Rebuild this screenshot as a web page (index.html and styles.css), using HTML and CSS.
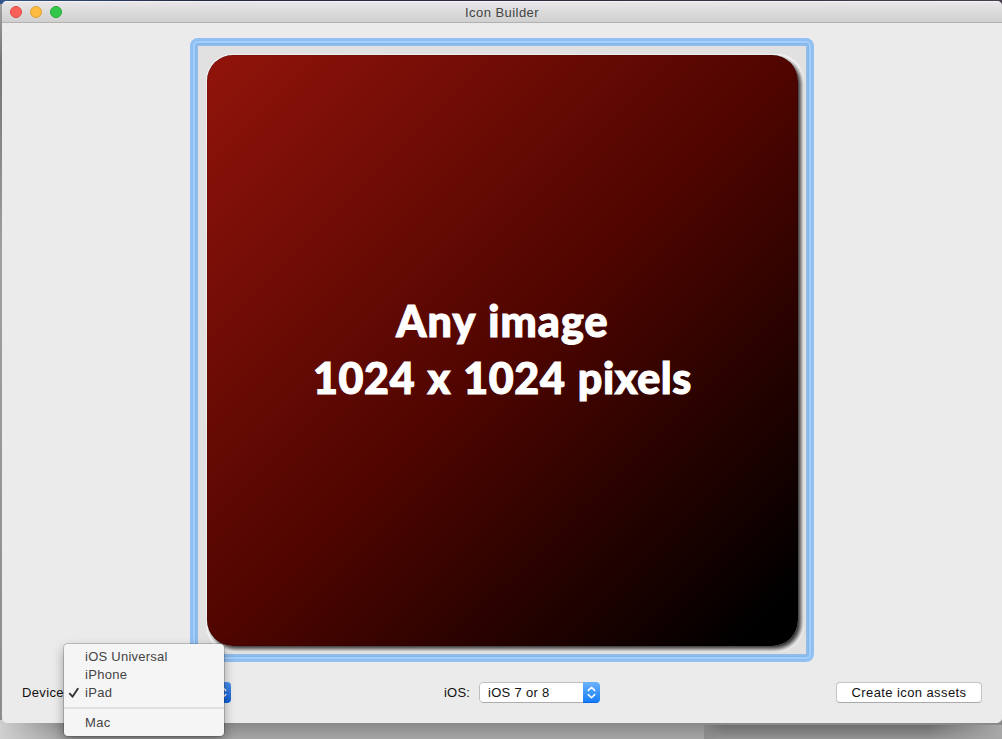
FILE: index.html
```
<!DOCTYPE html>
<html lang="en">
<head>
<meta charset="utf-8">
<title>Icon Builder</title>
<link rel="stylesheet" href="styles.css">
</head>
<body>
<main class="window">
  <header class="titlebar">
    <div class="lights"><span class="light close"></span><span class="light minimize"></span><span class="light zoom"></span></div>
    <h1 class="title"><span class="t-title">Icon Builder</span></h1>
  </header>
  <section class="content">
    <div class="well">
      <div class="well-line">
        <div class="well-inner">
          <div class="picture-back">
            <div class="picture">
              <p class="line-one">Any image</p>
              <p class="line-two">1024 x 1024 pixels</p>
            </div>
          </div>
        </div>
      </div>
    </div>
  </section>
  <footer class="controls">
    <div class="field device">
      <span class="t-device">Device:</span>
      <div class="popup device-popup"><span class="popup-value"></span><span class="stepper"><svg width="17" height="21" viewBox="0 0 17 21"><path d="M5.3 8.4 8.5 5.3l3.2 3.1M5.3 12.6l3.2 3.1 3.2-3.1"/></svg></span></div>
    </div>
    <div class="field ios">
      <span class="t-ios">iOS:</span>
      <div class="popup ios-popup"><span class="popup-value"><span class="t-value">iOS 7 or 8</span></span><span class="stepper"><svg width="17" height="21" viewBox="0 0 17 21"><path d="M5.3 8.4 8.5 5.3l3.2 3.1M5.3 12.6l3.2 3.1 3.2-3.1"/></svg></span></div>
    </div>
    <button class="create"><span class="t-create">Create icon assets</span></button>
  </footer>
</main>
<div class="behind"></div>
<ul class="menu">
  <li><span class="tick"></span><span class="m-universal">iOS Universal</span></li>
  <li><span class="tick"></span><span class="m-iphone">iPhone</span></li>
  <li><span class="tick"><svg width="12" height="12" viewBox="0 0 12 12"><path d="M1.8 6.7 4.5 9.7 9.8 1.8"/></svg></span><span class="m-ipad">iPad</span></li>
  <li class="separator"></li>
  <li><span class="tick"></span><span class="m-mac">Mac</span></li>
</ul>
</body>
</html>
```
FILE: styles.css
```
* { box-sizing: border-box; }
body {
  margin: 0;
  width: 1002px;
  height: 739px;
  overflow: hidden;
  position: relative;
  padding: 1px 0 0 2px;
  background: linear-gradient(90deg, #34568a 0, #23283f 200px, #322b40 600px, #46404c 1002px) 0 0 / 1002px 4px no-repeat,
    linear-gradient(#a0a0a0 0, #747474 60px, #a0a0a0 250px, #8c8c8c 700px) 0 4px / 2px 720px no-repeat,
    #a4a4a4;
  font: 13px/18px "Liberation Sans", Arial, sans-serif;
  color: #111;
}
.window {
  position: relative;
  z-index: 1;
  width: 1000px;
  height: 722px;
  display: flex;
  flex-direction: column;
  background: #ebebeb;
  border-radius: 5px;
  overflow: hidden;
}
.titlebar {
  flex: none;
  height: 22px;
  display: grid;
  grid-template-columns: 70px 1fr 70px;
  align-items: center;
  background: linear-gradient(#e8e6e8, #d0d0d0);
  border-top: 1px solid #f4f2f4;
  border-bottom: 1px solid #b1b1b1;
}
.lights { display: flex; gap: 8px; padding-left: 8px; }
.light { width: 12px; height: 12px; border-radius: 50%; border: 1px solid; }
.close { background: #fc605b; border-color: #e2463f; }
.minimize { background: #fdbc40; border-color: #dfa034; }
.zoom { background: #34c84a; border-color: #24aa35; }
.title { margin: 0; font-size: 13px; line-height: 18px; font-weight: 400; text-align: center; color: #444; padding-top: 1px; }
.content { flex: none; height: 639px; padding: 15px 0 0 188px; }
.well { width: 624px; height: 624px; padding: 2px; border-radius: 8px; background: #92c0f4; }
.well-line { height: 620px; border-radius: 6px; background: #8fbcec; padding: 1px; box-shadow: inset 0 0 0 1px #8ebcef, inset 0 0 0 3px #a3cffb, inset 0 0 0 4px #86b5ea; }
.well-inner { height: 608px; margin: 5px; padding: 8px; background: #e1e1e1; }
.picture-back { width: 598px; height: 598px; overflow: hidden; padding: 1px 0 0 1px; border-radius: 27px; background: #fff; }
.picture {
  width: 591px;
  height: 591px;
  border-radius: 26px;
  padding-top: 237px;
  text-align: center;
  color: #fff;
  background: linear-gradient(135deg, #91140b 0%, #500500 50%, #000 95%);
  box-shadow: inset 0 0 1px rgba(0,0,0,.8), 3px 3px 5px rgba(0,0,0,.85);
  font: 900 43px/57px Lato, sans-serif;
  -webkit-text-stroke: 1.1px #fff;
}
.picture p { margin: 0; white-space: nowrap; word-spacing: 1.5px; }
.line-one { letter-spacing: 1.1px; }
.line-two { letter-spacing: .6px; }
.controls { flex: 1; display: flex; align-items: flex-start; padding: 20px 20px 0; white-space: nowrap; }
.field { display: flex; line-height: 21px; }
.field > span { width: 47px; }
.device { width: 422px; }
.device-popup { width: 162px; }
.ios { width: 392px; }
.field.ios > span { width: 35px; }
.ios-popup { width: 121px; }
.popup { height: 21px; display: flex; border-radius: 4px; background: #fff; overflow: hidden; }
.popup-value { flex: 1; padding-left: 8px; border: 1px solid #bfbfbf; border-right: 0; border-bottom-color: #adadad; border-radius: 4px 0 0 4px; line-height: 19px; }
.stepper { width: 17px; height: 21px; background: linear-gradient(#6cb3fa, #157efb); border-bottom: 1px solid #0867e2; }
.device .stepper { background: linear-gradient(#4a91ee, #1360d8); }
svg { display: block; fill: none; stroke-linecap: round; stroke-linejoin: round; }
.stepper svg { stroke: #fff; stroke-width: 1.5; }
.create { width: 146px; height: 21px; padding: 0; font: inherit; line-height: 19px; color: #111; background: #fff; border: 1px solid #c3c3c3; border-bottom-color: #aaa; border-radius: 4px; }
.behind { position: absolute; left: 0; top: 720px; width: 1002px; height: 19px; background: linear-gradient(#828282, #a6a6a6); }
.behind::after { content: ""; position: absolute; left: 704px; right: 0; top: 5px; height: 14px; background: linear-gradient(90deg, rgba(140,140,140,.7), rgba(140,140,140,0) 20px, rgba(150,150,150,0) 75%, #a8a8a8), linear-gradient(#6c6c6c, #949494); }
.behind::before { content: ""; position: absolute; left: 0; top: 0; width: 65px; height: 19px; background: linear-gradient(90deg, #d0d0d0, rgba(130,130,130,0)); }
.menu {
  position: absolute;
  z-index: 2;
  left: 64px;
  top: 644px;
  width: 160px;
  height: 92px;
  margin: 0;
  padding: 4px 0;
  list-style: none;
  border-radius: 4px;
  background: #f5f5f5;
  color: #444;
  box-shadow: 0 0 0 1px rgba(0,0,0,.17), 0 5px 12px rgba(0,0,0,.36);
}
.menu li { height: 18px; display: flex; align-items: center; white-space: nowrap; }
.tick { width: 21px; padding-left: 4px; }
.tick svg { stroke: #333; stroke-width: 1.9; }
.menu .separator { height: 2px; margin: 5px 0; background: #e1e1e1; }
.t-title { letter-spacing: .45px; }
.t-device { letter-spacing: .35px; }
.t-ios { letter-spacing: .2px; }
.t-value { letter-spacing: .3px; }
.t-create { letter-spacing: .4px; }
.m-universal { letter-spacing: .25px; }
.m-iphone, .m-ipad, .m-mac { letter-spacing: .3px; }
```
